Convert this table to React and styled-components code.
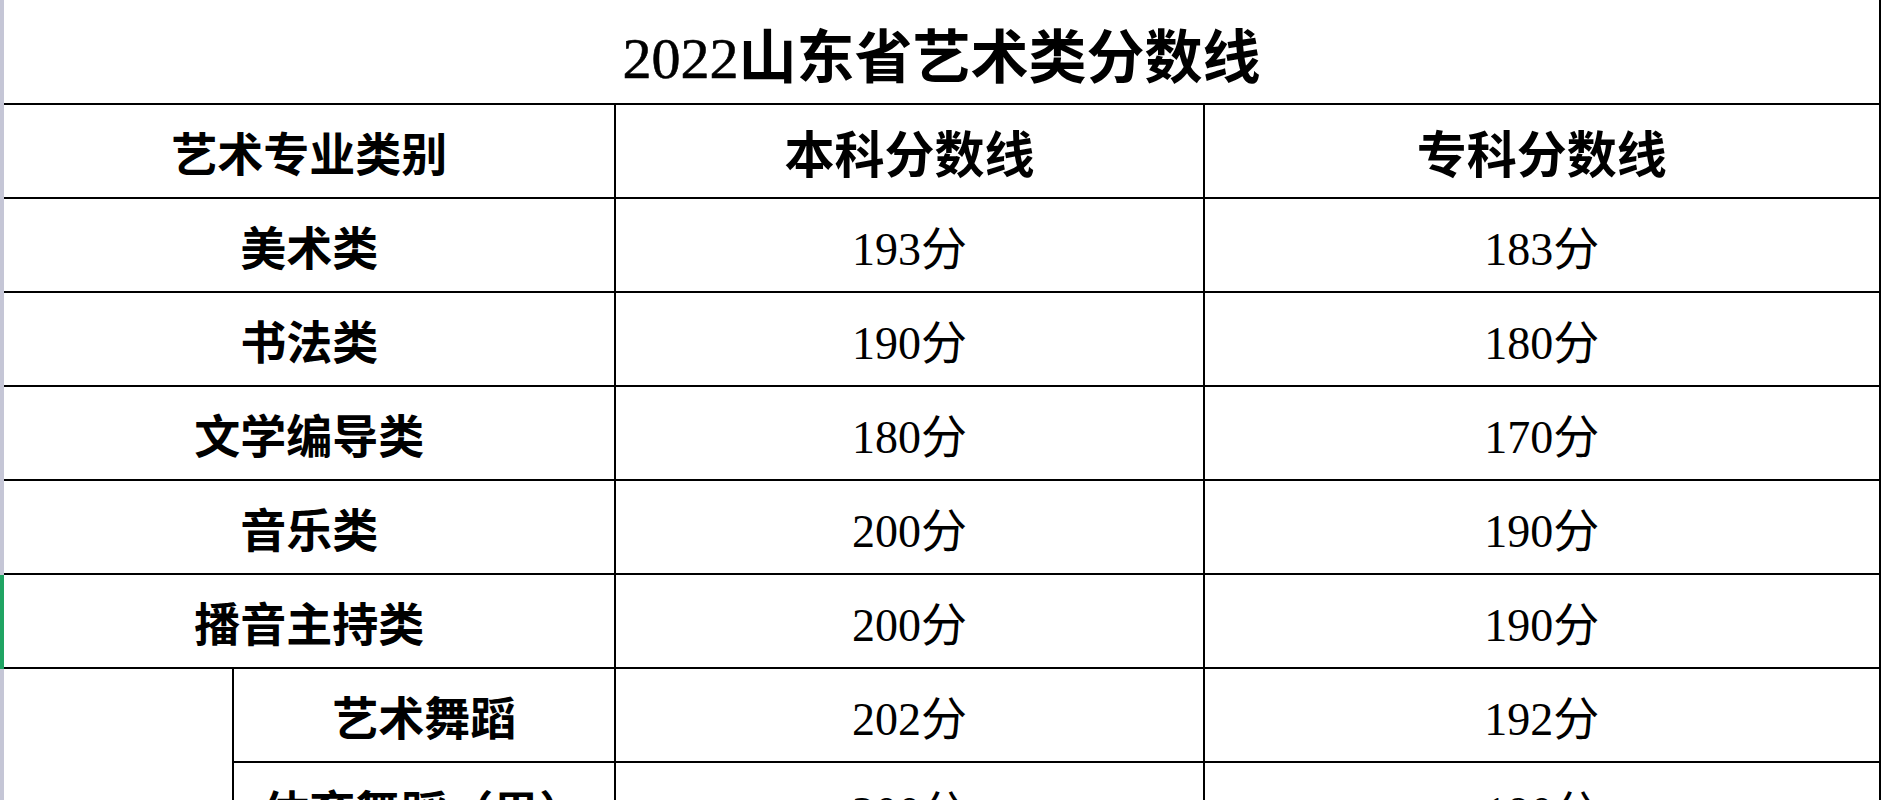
import React from "react";
import styled, { createGlobalStyle } from "styled-components";

const GlobalStyle = createGlobalStyle`
  html, body {
    margin: 0;
    padding: 0;
    background: #fff;
    overflow: hidden;
  }
  body {
    font-family: "Liberation Serif", "Noto Sans CJK SC", serif;
    color: #000;
  }
`;

const Page = styled.div`
  width: 1885px;
  height: 800px;
  overflow: hidden;
  background: #fff;
`;

const Sheet = styled.table`
  border-collapse: collapse;
  table-layout: fixed;
  width: 1881px;
  margin: 0;
  td {
    border: 2px solid #000;
    padding: 0;
    text-align: center;
    vertical-align: middle;
    white-space: nowrap;
  }
`;

const Row = styled.tr`
  height: ${(p) => p.$h || 94}px;
`;

const TitleCell = styled.td`
  && {
    border-top: none;
    border-left: 4px solid #c5c6d6;
    padding-top: 3px;
  }
  font-size: 58px;
  font-weight: 700;
`;

const Year = styled.span`
  font-weight: 400;
  -webkit-text-stroke: 0.6px #000;
`;

const HeadCell = styled.td`
  font-size: ${(p) => p.$size || 50}px;
  font-weight: 700;
  && {
    ${(p) => (p.$first ? "border-left: 4px solid #c5c6d6;" : "")}
  }
`;

const NameCell = styled.td`
  font-size: 46px;
  font-weight: 700;
  && {
    ${(p) =>
      p.$first
        ? `border-left: 4px solid ${p.$active ? "#1fa463" : "#c5c6d6"};`
        : ""}
  }
`;

const ScoreCell = styled.td`
  font-size: 46px;
  font-weight: 400;
`;

const rows = [
  { name: "美术类", ben: "193分", zhuan: "183分" },
  { name: "书法类", ben: "190分", zhuan: "180分" },
  { name: "文学编导类", ben: "180分", zhuan: "170分" },
  { name: "音乐类", ben: "200分", zhuan: "190分" },
  { name: "播音主持类", ben: "200分", zhuan: "190分", active: true },
];

const dance = [
  { name: "艺术舞蹈", ben: "202分", zhuan: "192分" },
  { name: "体育舞蹈（男）", ben: "200分", zhuan: "190分" },
  { name: "体育舞蹈（女）", ben: "200分", zhuan: "190分" },
  { name: "国际标准舞", ben: "200分", zhuan: "190分" },
];

export default function App() {
  return (
    <Page>
      <GlobalStyle />
      <Sheet>
        <colgroup>
          <col style={{ width: 231 }} />
          <col style={{ width: 382 }} />
          <col style={{ width: 588 }} />
          <col style={{ width: 676 }} />
        </colgroup>
        <tbody>
          <Row $h={104}>
            <TitleCell colSpan={4}>
              <Year>2022</Year>山东省艺术类分数线
            </TitleCell>
          </Row>
          <Row>
            <HeadCell colSpan={2} $first $size={46}>
              艺术专业类别
            </HeadCell>
            <HeadCell>本科分数线</HeadCell>
            <HeadCell>专科分数线</HeadCell>
          </Row>
          {rows.map((r) => (
            <Row key={r.name}>
              <NameCell colSpan={2} $first $active={r.active}>
                {r.name}
              </NameCell>
              <ScoreCell>{r.ben}</ScoreCell>
              <ScoreCell>{r.zhuan}</ScoreCell>
            </Row>
          ))}
          {dance.map((r, i) => (
            <Row key={r.name}>
              {i === 0 && (
                <NameCell rowSpan={dance.length} $first>
                  舞蹈类
                </NameCell>
              )}
              <NameCell>{r.name}</NameCell>
              <ScoreCell>{r.ben}</ScoreCell>
              <ScoreCell>{r.zhuan}</ScoreCell>
            </Row>
          ))}
        </tbody>
      </Sheet>
    </Page>
  );
}
